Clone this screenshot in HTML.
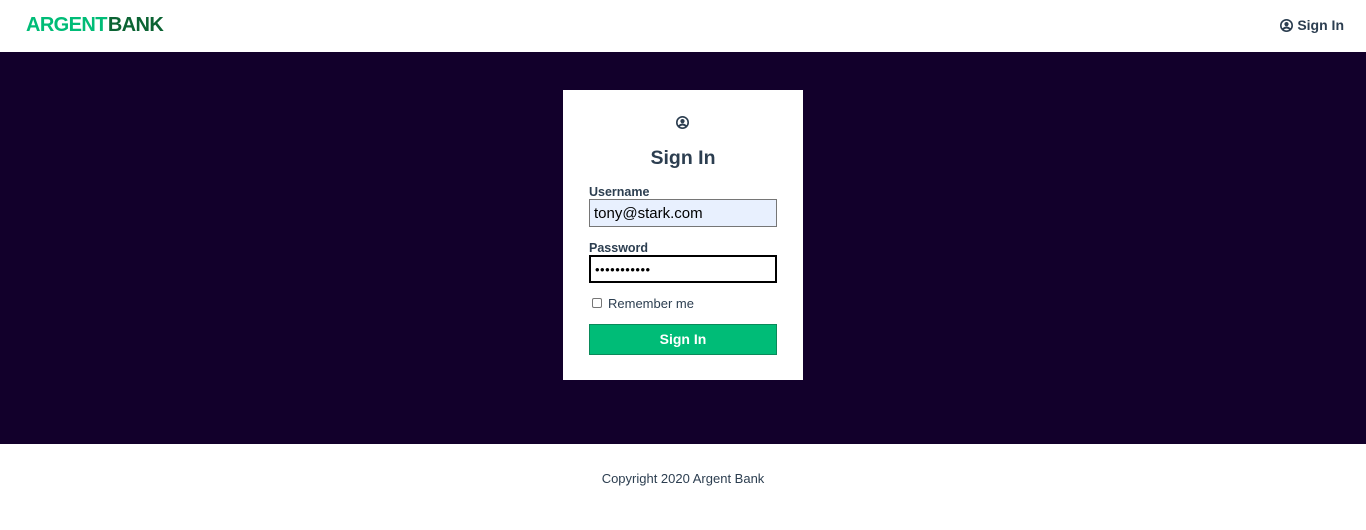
<!DOCTYPE html>
<html><head><style>
*{box-sizing:border-box;margin:0;padding:0}
body{width:1366px;height:530px;font-family:"Liberation Sans",sans-serif;color:#2c3e50;background:#fff;overflow:hidden;position:relative}
.nav{height:52px;position:relative}
.logo{position:absolute;left:26px;top:14px;font-size:20px;font-weight:bold;letter-spacing:-0.6px;color:#00bc77}
.logo span{color:#0b6333;margin-left:1px}
.si{position:absolute;right:22px;top:17px;font-size:14px;font-weight:bold;color:#2c3e50;display:flex;align-items:center;gap:4px}
.main{position:absolute;top:52px;left:0;width:1366px;height:392px;background:#12002b}
.card{position:absolute;left:563px;top:38px;width:240px;height:290px;background:#fff;padding:0 26px}
.ic{position:absolute;left:113px;top:26px}
h1{position:absolute;top:57px;left:0;width:240px;text-align:center;font-size:19.5px;font-weight:bold}
label{position:absolute;left:26px;font-size:12.5px;font-weight:bold}
.in{position:absolute;left:26px;width:188px;height:28px;font-size:15px;padding:4px;color:#000}
.foot{position:absolute;top:471px;width:100%;text-align:center;font-size:13px;color:#2c3e50}
</style></head><body>
<div class="nav"><div class="logo">ARGENT<span>BANK</span></div>
<div class="si"><svg width="13" height="13" viewBox="0 0 16 16"><circle cx="8" cy="8" r="7" fill="none" stroke="#2c3e50" stroke-width="2"/><circle cx="8" cy="6.3" r="2.6" fill="#2c3e50"/><path d="M3.5 12.5Q8 8.5 12.5 12.5" stroke="#2c3e50" stroke-width="2.4" fill="none"/></svg>Sign In</div></div>
<div class="main"><div class="card">
<svg class="ic" width="13" height="13" viewBox="0 0 16 16"><circle cx="8" cy="8" r="7" fill="none" stroke="#2c3e50" stroke-width="2"/><circle cx="8" cy="6.3" r="2.6" fill="#2c3e50"/><path d="M3.5 12.5Q8 8.5 12.5 12.5" stroke="#2c3e50" stroke-width="2.4" fill="none"/></svg>
<h1>Sign In</h1>
<label style="top:95px">Username</label>
<div class="in" style="top:109px;background:#e8f0fe;border:1px solid #767676;padding-top:5px">tony@stark.com</div>
<label style="top:151px">Password</label>
<div class="in" style="top:165px;border:2px solid #000;font-size:13px;padding-top:5px;letter-spacing:0.5px">•••••••••••</div>
<div style="position:absolute;left:29px;top:208px;width:10px;height:10px;border:1px solid #767676;border-radius:2px"></div>
<div style="position:absolute;left:45px;top:206px;font-size:13px">Remember me</div>
<div style="position:absolute;left:26px;top:234px;width:188px;height:31px;background:#00bc77;border:1px solid #0a8a5a;color:#fff;font-weight:bold;font-size:14px;text-align:center;line-height:29px">Sign In</div>
</div></div>
<div class="foot">Copyright 2020 Argent Bank</div>
</body></html>
